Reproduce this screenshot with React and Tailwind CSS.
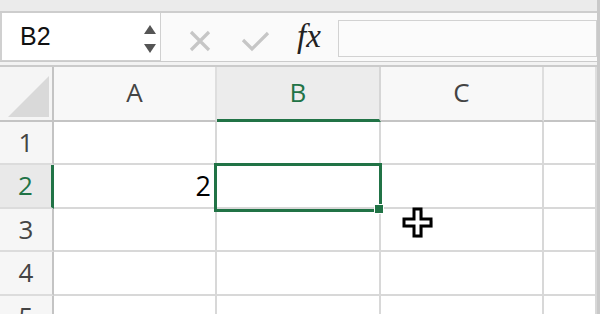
import React from 'react';

const rows = [
  { n: 1, h: 'h-[43px]' },
  { n: 2, h: 'h-[44px]', active: true, value: '2' },
  { n: 3, h: 'h-[43px]' },
  { n: 4, h: 'h-[44px]' },
  { n: 5, h: 'h-[44px]' },
];

const cols = [
  { k: 'A', w: 'w-[163px]' },
  { k: 'B', w: 'w-[164px]', active: true },
  { k: 'C', w: 'w-[163px]' },
  { k: '', w: 'flex-1' },
];

function PlusCursor() {
  return (
    <svg width="34" height="34" viewBox="0 0 34 34" className="absolute left-[402px] top-[140px]">
      <path
        d="M12 2h7v10h10v7H19v10h-7V19H2v-7h10z"
        fill="#8a8a8a"
        opacity="0.35"
        transform="translate(1.8 1.8)"
      />
      <path d="M12 2h7v10h10v7H19v10h-7V19H2v-7h10z" fill="#fff" stroke="#000" strokeWidth="3" strokeLinejoin="miter" />
    </svg>
  );
}

export default function App() {
  return (
    <div className="w-[600px] h-[314px] overflow-hidden bg-white border-r-[3px] border-[#c9c9c9] font-['Open_Sans',sans-serif]">
      {/* window top strip */}
      <div className="h-[13px] bg-[#ebebeb] border-b-2 border-[#cdcdcd]" />

      {/* formula bar */}
      <div className="h-[48px] flex bg-[#fafafa]">
        <div className="w-[161px] h-full bg-white border-l-2 border-r border-b border-[#d0d0d0] flex items-center justify-between pl-[18px] pr-[2px]">
          <span className="text-[25px] text-[#111] font-['Liberation_Sans',sans-serif] leading-none">B2</span>
          <svg width="16" height="34" viewBox="0 0 16 34">
            <path d="M2 14h12L8 5z" fill="#555" />
            <path d="M2 24h12L8 33z" fill="#555" />
          </svg>
        </div>
        <svg width="22" height="22" viewBox="0 0 22 22" className="ml-[28px] mt-[17px]">
          <path d="M2 2l18 18M20 2L2 20" stroke="#c6c6c6" strokeWidth="3.2" />
        </svg>
        <svg width="30" height="22" viewBox="0 0 30 22" className="ml-[30px] mt-[17px]">
          <path d="M2 10l9 9L27 3" stroke="#c6c6c6" strokeWidth="3.2" fill="none" />
        </svg>
        <span className="ml-[26px] mt-[4px] text-[33px] italic text-[#222] font-['Liberation_Serif',serif] leading-[38px]">fx</span>
        <div className="ml-[17px] mt-[7px] h-[37px] flex-1 border border-[#d2d2d2] bg-[#fbfbfb]" />
      </div>

      {/* separator */}
      <div className="h-[6px] bg-[#f3f3f3] border-t border-b-2 border-[#cbcbcb]" />

      {/* sheet grid */}
      <div className="relative">
        <div className="flex h-[55px]">
          <div className="w-[54px] bg-[#f5f5f5] border-r-2 border-b-2 border-[#c4c4c4] relative">
            <svg width="42" height="42" viewBox="0 0 42 42" className="absolute left-[8px] top-[9px]">
              <path d="M41 0v41H0z" fill="#d9d9d9" />
            </svg>
          </div>
          {cols.map((c, i) => (
            <div
              key={i}
              className={`${c.w} flex items-center justify-center border-r-2 text-[26px] ${
                c.active
                  ? 'bg-[#ececec] border-b-[3px] border-b-[#217346] border-r-[#d6d6d6] text-[#217346]'
                  : 'bg-[#f8f8f8] border-b-2 border-b-[#c4c4c4] border-r-[#dedede] text-[#444]'
              }`}
            >
              <span className="mt-[-2px]">{c.k}</span>
            </div>
          ))}
        </div>

        {rows.map((r) => (
          <div key={r.n} className={`flex ${r.h}`}>
            <div
              className={`w-[54px] flex items-center justify-center border-b-2 border-b-[#dcdcdc] text-[26px] ${
                r.active
                  ? 'bg-[#e9e9e9] border-r-[3px] border-r-[#217346] text-[#217346]'
                  : 'bg-[#f6f6f6] border-r-2 border-r-[#c4c4c4] text-[#444]'
              }`}
            >
              <span className="mt-[-1px]">{r.n}</span>
            </div>
            {cols.map((c, i) => (
              <div
                key={i}
                className={`${c.w} border-r-2 border-b-2 border-[#d8d8d8] flex items-center justify-end pr-[4px] text-[27px] text-black`}
              >
                {c.k === 'A' && r.value}
              </div>
            ))}
          </div>
        ))}

        {/* selection */}
        <div className="absolute left-[214px] top-[96px] w-[168px] h-[49px] border-[3px] border-[#217346]" />
        <div className="absolute left-[374px] top-[137px] w-[10px] h-[10px] bg-[#217346] border border-white" />

        <PlusCursor />
      </div>
    </div>
  );
}
